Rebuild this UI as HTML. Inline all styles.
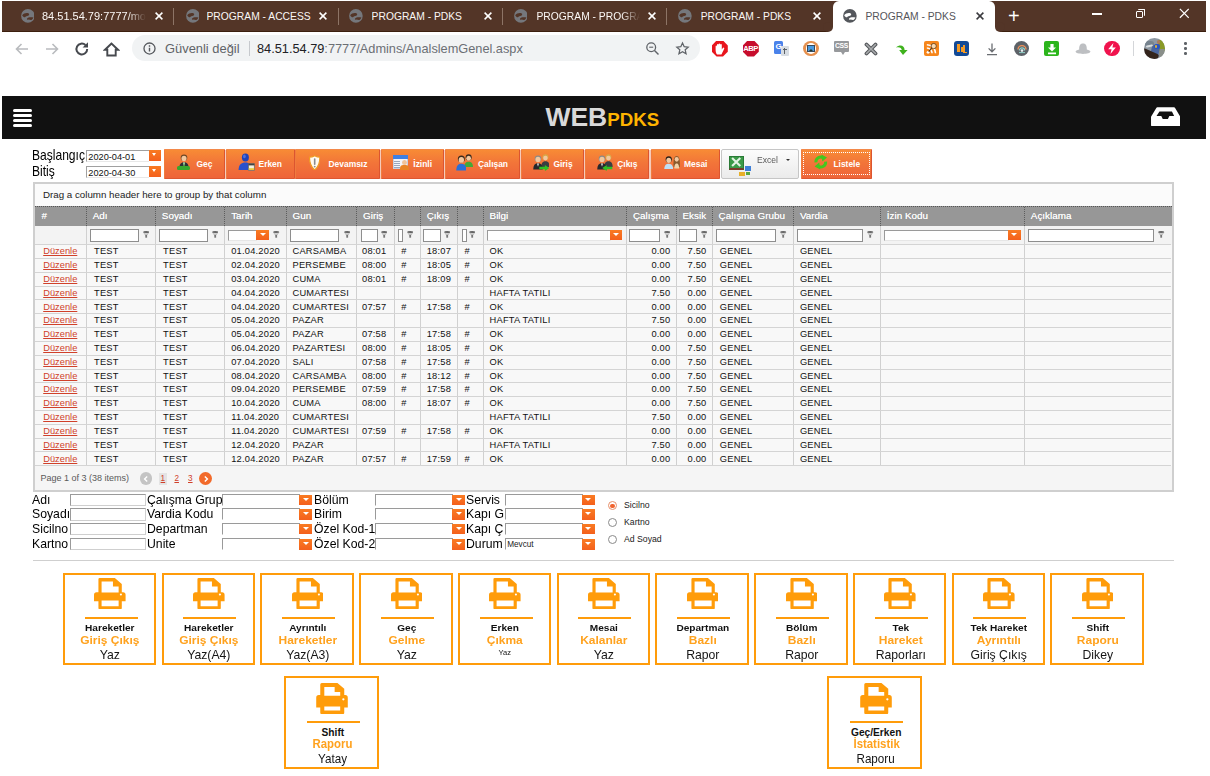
<!DOCTYPE html>
<html lang="tr"><head><meta charset="utf-8"><title>PROGRAM - PDKS</title>
<style>
*{box-sizing:border-box;margin:0;padding:0}
html,body{width:1210px;height:776px;overflow:hidden;background:#fff}
body{position:relative;font-family:"Liberation Sans",sans-serif;color:#000}
.a{position:absolute;white-space:nowrap}
.t{position:absolute;white-space:nowrap;line-height:1}
/* chrome */
#tabbar{left:1.5px;top:1px;width:1204px;height:31px;background:#533527;border-bottom:1px solid #3c1f0e}
.tabtxt{color:#fbf7f5;font-size:10.3px;top:11.5px}
.tabx{color:#fff;font-size:13px;top:9px;font-weight:bold}
.sep{width:1px;height:17px;top:8px;background:#8d7466}
#omni{left:132px;top:34.5px;width:568px;height:26px;border-radius:13px;background:#f1f3f4}
/* header */
#hdr{left:1.5px;top:95.7px;width:1204px;height:43.8px;background:#111}
.bar{left:13.3px;width:18.3px;height:3px;background:#fff;border-radius:1.5px}
/* toolbar */
.btn{top:149.2px;height:29.8px;background:linear-gradient(#f88b35 0%,#f27539 45%,#ee6439 100%);border:1px solid;border-color:#f3894a #dc5530 #dd5731 #f07c3e;border-radius:1px}
.btxt{color:#fff;font-weight:bold;font-size:8.45px;top:159.6px}
/* grid */
.hd{color:#fff;font-size:9.9px;top:211.1px;font-weight:normal;text-shadow:0 0 .6px rgba(255,255,255,.8)}
.vl{width:1px;background:#d0d0d0;top:225.6px;height:240.2px}
.hl{height:1px;background:#d4d4d4;left:35px;width:1136px}
.c{font-size:9.3px;color:#111;letter-spacing:.22px}
.fi{top:228.9px;height:12.7px;background:#fff;border:1px solid #8e8e8e;border-radius:0}
.lnk{color:#d0402a;text-decoration:underline;font-size:9.3px;letter-spacing:0}
/* form */
.lb{font-size:13.3px;color:#000;transform-origin:0 50%;transform:scaleX(.92)}
.inp{height:12.4px;border:1px solid #9a9a9a;border-right-color:#cfcfcf;border-bottom-color:#cfcfcf;background:#fff}
.cb{height:10.6px;width:12.8px;background:linear-gradient(#f97b22,#f4601c)}
/* tiles */
.tile{border:2px solid #ff9c0a;background:#fff}
.l1{font-size:9.2px;font-weight:bold;color:#111;text-align:center;width:100%;left:0;transform:scaleX(1.1)}
.l2{font-size:11.1px;font-weight:bold;color:#ffa21e;text-align:center;width:100%;left:0;transform:scaleX(1.08)}
.l3{font-size:13px;color:#151515;text-align:center;width:100%;left:0;transform:scaleX(.94)}
</style></head>
<body>
<div class="a" id="tabbar"></div>
<div class="a" style="left:832.6px;top:1px;width:162.8px;height:32px;background:#fff;border-radius:6px 6px 0 0"></div>
<div class="a" style="left:827.6px;top:27px;width:5px;height:5px;background:#fff"></div><div class="a" style="left:822.6px;top:22px;width:10px;height:10px;border-radius:5px;background:#533527"></div>
<div class="a" style="left:995.4px;top:27px;width:5px;height:5px;background:#fff"></div><div class="a" style="left:995.4px;top:22px;width:10px;height:10px;border-radius:5px;background:#533527"></div>
<svg class="a" style="left:20.6px;top:8.8px" width="13.8" height="13.8" viewBox="0 0 14 14"><circle cx="7" cy="7" r="6.9" fill="#75777c"/><path d="M1.2 6.4C2.6 4.2 5.4 3.6 7.4 4.2C8.8 4.7 8.6 6.2 7.2 6.8C5.8 7.4 5 7 4.4 8C3.8 9 2.4 8.4 1.2 6.4ZM6.2 9.6C7.2 8.4 9.6 8 12.6 8.6C12 10.2 11 11.2 9.8 11.2C8.6 11.2 8.4 10.6 7.4 10.8C6.4 11 5.6 10.4 6.2 9.6Z" fill="#533527"/></svg><div class="t tabtxt" style="left:42.0px;max-width:104px;overflow:hidden;font-size:11px;top:10.8px;-webkit-mask-image:linear-gradient(90deg,#000 82%,transparent);mask-image:linear-gradient(90deg,#000 82%,transparent)">84.51.54.79:7777/mo</div><svg class="a" style="left:155.0px;top:12.2px" width="8" height="8" viewBox="0 0 8 8"><path d="M.6 .6L7.4 7.4M7.4 .6L.6 7.4" stroke="#fff" stroke-width="1.5"/></svg>
<svg class="a" style="left:185.5px;top:8.8px" width="13.8" height="13.8" viewBox="0 0 14 14"><circle cx="7" cy="7" r="6.9" fill="#75777c"/><path d="M1.2 6.4C2.6 4.2 5.4 3.6 7.4 4.2C8.8 4.7 8.6 6.2 7.2 6.8C5.8 7.4 5 7 4.4 8C3.8 9 2.4 8.4 1.2 6.4ZM6.2 9.6C7.2 8.4 9.6 8 12.6 8.6C12 10.2 11 11.2 9.8 11.2C8.6 11.2 8.4 10.6 7.4 10.8C6.4 11 5.6 10.4 6.2 9.6Z" fill="#533527"/></svg><div class="t tabtxt" style="left:206.5px;max-width:110px;overflow:hidden">PROGRAM - ACCESS</div><svg class="a" style="left:319.0px;top:12.2px" width="8" height="8" viewBox="0 0 8 8"><path d="M.6 .6L7.4 7.4M7.4 .6L.6 7.4" stroke="#fff" stroke-width="1.5"/></svg>
<svg class="a" style="left:349.1px;top:8.8px" width="13.8" height="13.8" viewBox="0 0 14 14"><circle cx="7" cy="7" r="6.9" fill="#75777c"/><path d="M1.2 6.4C2.6 4.2 5.4 3.6 7.4 4.2C8.8 4.7 8.6 6.2 7.2 6.8C5.8 7.4 5 7 4.4 8C3.8 9 2.4 8.4 1.2 6.4ZM6.2 9.6C7.2 8.4 9.6 8 12.6 8.6C12 10.2 11 11.2 9.8 11.2C8.6 11.2 8.4 10.6 7.4 10.8C6.4 11 5.6 10.4 6.2 9.6Z" fill="#533527"/></svg><div class="t tabtxt" style="left:371.6px;max-width:110px;overflow:hidden">PROGRAM - PDKS</div><svg class="a" style="left:483.9px;top:12.2px" width="8" height="8" viewBox="0 0 8 8"><path d="M.6 .6L7.4 7.4M7.4 .6L.6 7.4" stroke="#fff" stroke-width="1.5"/></svg>
<svg class="a" style="left:513.5px;top:8.8px" width="13.8" height="13.8" viewBox="0 0 14 14"><circle cx="7" cy="7" r="6.9" fill="#75777c"/><path d="M1.2 6.4C2.6 4.2 5.4 3.6 7.4 4.2C8.8 4.7 8.6 6.2 7.2 6.8C5.8 7.4 5 7 4.4 8C3.8 9 2.4 8.4 1.2 6.4ZM6.2 9.6C7.2 8.4 9.6 8 12.6 8.6C12 10.2 11 11.2 9.8 11.2C8.6 11.2 8.4 10.6 7.4 10.8C6.4 11 5.6 10.4 6.2 9.6Z" fill="#533527"/></svg><div class="t tabtxt" style="left:536.5px;max-width:103px;overflow:hidden;-webkit-mask-image:linear-gradient(90deg,#000 82%,transparent);mask-image:linear-gradient(90deg,#000 82%,transparent)">PROGRAM - PROGRA</div><svg class="a" style="left:648.0px;top:12.2px" width="8" height="8" viewBox="0 0 8 8"><path d="M.6 .6L7.4 7.4M7.4 .6L.6 7.4" stroke="#fff" stroke-width="1.5"/></svg>
<svg class="a" style="left:678.4px;top:8.8px" width="13.8" height="13.8" viewBox="0 0 14 14"><circle cx="7" cy="7" r="6.9" fill="#75777c"/><path d="M1.2 6.4C2.6 4.2 5.4 3.6 7.4 4.2C8.8 4.7 8.6 6.2 7.2 6.8C5.8 7.4 5 7 4.4 8C3.8 9 2.4 8.4 1.2 6.4ZM6.2 9.6C7.2 8.4 9.6 8 12.6 8.6C12 10.2 11 11.2 9.8 11.2C8.6 11.2 8.4 10.6 7.4 10.8C6.4 11 5.6 10.4 6.2 9.6Z" fill="#533527"/></svg><div class="t tabtxt" style="left:700.7px;max-width:110px;overflow:hidden">PROGRAM - PDKS</div><svg class="a" style="left:812.5px;top:12.2px" width="8" height="8" viewBox="0 0 8 8"><path d="M.6 .6L7.4 7.4M7.4 .6L.6 7.4" stroke="#fff" stroke-width="1.5"/></svg>
<div class="a sep" style="left:173.3px"></div><div class="a sep" style="left:337.9px"></div><div class="a sep" style="left:502.0px"></div><div class="a sep" style="left:666.2px"></div>
<svg class="a" style="left:843.1px;top:8.8px" width="13.8" height="13.8" viewBox="0 0 14 14"><circle cx="7" cy="7" r="6.9" fill="#54575c"/><path d="M1.2 6.4C2.6 4.2 5.4 3.6 7.4 4.2C8.8 4.7 8.6 6.2 7.2 6.8C5.8 7.4 5 7 4.4 8C3.8 9 2.4 8.4 1.2 6.4ZM6.2 9.6C7.2 8.4 9.6 8 12.6 8.6C12 10.2 11 11.2 9.8 11.2C8.6 11.2 8.4 10.6 7.4 10.8C6.4 11 5.6 10.4 6.2 9.6Z" fill="#fff"/></svg><div class="t tabtxt" style="left:865.4px;color:#55555a">PROGRAM - PDKS</div><svg class="a" style="left:976.3px;top:12.2px" width="8" height="8" viewBox="0 0 8 8"><path d="M.6 .6L7.4 7.4M7.4 .6L.6 7.4" stroke="#3a3a3e" stroke-width="1.5"/></svg>
<div class="t" style="left:1008px;top:6px;color:#fff;font-size:20px">+</div><div class="a" style="left:1092px;top:13.4px;width:10px;height:1.4px;background:#fff"></div><div class="a" style="left:1135.6px;top:11px;width:7.4px;height:7.4px;border:1.1px solid #fff;border-radius:1px"></div><div class="a" style="left:1137.8px;top:8.9px;width:7.4px;height:7.4px;border:1.1px solid #fff;border-left:none;border-bottom:none;border-radius:1px"></div><svg class="a" style="left:1178.8px;top:8.4px" width="10.6" height="10.6" viewBox="0 0 12 12"><path d="M1 1L11 11M11 1L1 11" stroke="#fff" stroke-width="1.4"/></svg>
<svg class="a" style="left:14px;top:41px" width="16" height="16" viewBox="0 0 16 16"><path d="M14 8H2.5M7.5 3L2.5 8L7.5 13" fill="none" stroke="#b9bbbe" stroke-width="1.6"/></svg><svg class="a" style="left:44px;top:41px" width="16" height="16" viewBox="0 0 16 16"><path d="M2 8H13.5M8.5 3L13.5 8L8.5 13" fill="none" stroke="#b9bbbe" stroke-width="1.6"/></svg><svg class="a" style="left:73.5px;top:41px" width="16" height="16" viewBox="0 0 16 16"><path d="M13.2 8A5.4 5.4 0 1 1 11.5 4.1" fill="none" stroke="#46494e" stroke-width="2"/><path d="M14 1.2V6.6H8.6Z" fill="#46494e"/></svg><svg class="a" style="left:103px;top:40.5px" width="17" height="17" viewBox="0 0 17 17"><path d="M8.5 2.5L2 8.7H4.3V14.5H12.7V8.7H15Z" fill="none" stroke="#46494e" stroke-width="1.9" stroke-linejoin="miter"/></svg>
<div class="a" id="omni"></div><svg class="a" style="left:142.6px;top:42px" width="13" height="13" viewBox="0 0 12 12"><circle cx="6" cy="6" r="5.1" fill="none" stroke="#55585d" stroke-width="1.2"/><path d="M6 5.3V8.8M6 3.1V4.3" stroke="#55585d" stroke-width="1.3"/></svg><div class="t" style="left:165px;top:42.7px;font-size:12.9px;color:#5f6368">Güvenli değil</div><div class="a" style="left:248.5px;top:40.5px;width:1px;height:15px;background:#c6c9cd"></div><div class="t" style="left:257px;top:42.8px;font-size:12.76px;color:#202124">84.51.54.79<span style="color:#6b6f74">:7777/Admins/AnalslemGenel.aspx</span></div>
<svg class="a" style="left:645px;top:41px" width="15" height="15" viewBox="0 0 15 15"><circle cx="6.2" cy="6.2" r="4.4" fill="none" stroke="#5f6368" stroke-width="1.3"/><path d="M9.5 9.5L13.5 13.5" stroke="#5f6368" stroke-width="1.5"/><path d="M4.2 6.2H8.2" stroke="#5f6368" stroke-width="1.1"/></svg><svg class="a" style="left:675px;top:40.5px" width="15" height="15" viewBox="0 0 24 24"><path d="M12 3.2l2.7 5.9 6.4.7-4.8 4.3 1.4 6.3L12 17.2 6.3 20.4l1.4-6.3L2.9 9.8l6.4-.7z" fill="none" stroke="#5f6368" stroke-width="2"/></svg>
<div class="a" style="left:711.8px;top:40.6px;width:16px;height:16px;background:#e8151d;clip-path:polygon(30% 0,70% 0,100% 30%,100% 70%,70% 100%,30% 100%,0 70%,0 30%)"></div><svg class="a" style="left:715px;top:42.6px" width="10" height="12" viewBox="0 0 10 12"><path d="M2 11.4C1 10 .6 8.6 .6 6.2V3.4Q.6 2.6 1.3 2.6T2 3.4V1.8Q2 1 2.8 1T3.6 1.8V1.2Q3.6 .4 4.4 .4T5.2 1.2V1.8Q5.2 1 6 1T6.8 1.8V6.4L7.8 5Q8.4 4.2 9 4.8T9 6.2L7.4 9.4Q6.8 10.8 6.4 11.4Z" fill="#fff"/></svg><div class="a" style="left:742.8px;top:40.6px;width:16px;height:16px;background:#c70d2c;clip-path:polygon(30% 0,70% 0,100% 30%,100% 70%,70% 100%,30% 100%,0 70%,0 30%)"></div><div class="t" style="left:743.2px;top:44.9px;font-size:7.6px;font-weight:bold;color:#fff;letter-spacing:-.45px">ABP</div><div class="a" style="left:773.8px;top:41.2px;width:9.6px;height:12.6px;background:#4a82ea;border-radius:1.5px"></div><div class="a" style="left:781px;top:46px;width:7.5px;height:10px;background:#d8dde3;border-radius:1px"></div><div class="t" style="left:775.5px;top:43px;font-size:8px;font-weight:bold;color:#fff">G</div><div class="a" style="left:782.6px;top:49px;width:4.4px;height:1.2px;background:#5a6066"></div><div class="a" style="left:784.2px;top:48px;width:1.2px;height:6px;background:#5a6066"></div><div class="a" style="left:803.3px;top:40.7px;width:15.8px;height:15.8px;border-radius:50%;background:#e6914f"></div><div class="a" style="left:806.0px;top:43.4px;width:10.4px;height:10.4px;border-radius:50%;background:#fff"></div><div class="a" style="left:807.4px;top:45.4px;width:7.6px;height:6.4px;background:#4a9ae0;border:1px solid #3a4a5a"></div><div class="a" style="left:809px;top:49px;border:2px solid transparent;border-bottom:2.4px solid #2a3a2a;border-top:none"></div><div class="a" style="left:834px;top:41.3px;width:14.8px;height:10.8px;background:#97999c;border-radius:1px"></div><div class="a" style="left:841.4px;top:51.5px;border:2.5px solid transparent;border-top:3px solid #97999c"></div><div class="t" style="left:834.9px;top:43.2px;font-size:6.8px;font-weight:bold;color:#fff;letter-spacing:-.3px">CSS</div><svg class="a" style="left:863.5px;top:41.6px" width="14" height="14" viewBox="0 0 14 14"><path d="M2.5 2.5L11.5 11.5M11.5 2.5L2.5 11.5" stroke="#55585c" stroke-width="3.8" stroke-linecap="round"/><path d="M2.5 2.5L11.5 11.5M11.5 2.5L2.5 11.5" stroke="#a9abad" stroke-width="1.6" stroke-linecap="round"/></svg><svg class="a" style="left:895px;top:42px" width="14" height="14" viewBox="0 0 14 14"><path d="M1 5.5C5 2 9.5 3.5 9.6 8H12.6L8 13L4.2 8H6.8C6.6 5.8 4.4 4.6 1 5.5Z" fill="#3fb21d"/></svg><div class="a" style="left:924.0px;top:41.0px;width:15.2px;height:15.2px;border-radius:2px;background:#f6861c"></div><svg class="a" style="left:924px;top:41px" width="15.2" height="15.2" viewBox="0 0 15 15"><circle cx="4" cy="11.2" r="1.4" fill="#fff"/><path d="M2.8 7A5.2 5.2 0 0 1 8 12.2M2.8 3.6A8.6 8.6 0 0 1 11.4 12.2" fill="none" stroke="#fff" stroke-width="1.5"/><circle cx="9.6" cy="5" r="2.6" fill="#fbd9b0" stroke="#5a3a18" stroke-width=".8"/><path d="M7.6 7L4.6 10.4" stroke="#5a3a18" stroke-width="1.2"/></svg><div class="a" style="left:954.0px;top:41.0px;width:15.2px;height:15.2px;border-radius:3px;background:#124a96"></div><div class="a" style="left:957.4px;top:43.6px;width:2.2px;height:8.4px;background:#f59a23"></div><div class="a" style="left:960.6px;top:46.6px;width:2.2px;height:5.4px;background:#f59a23"></div><div class="a" style="left:963.4px;top:52px;width:4px;height:1.4px;background:#f59a23"></div><div class="a" style="left:963.4px;top:44.6px;width:1.4px;height:8px;background:#f59a23"></div><svg class="a" style="left:984.8px;top:41.6px" width="14" height="14" viewBox="0 0 14 14"><path d="M7 1.5V9.5M3.6 6.4L7 9.8L10.4 6.4M2 12.6H12" fill="none" stroke="#6a6d72" stroke-width="1.3"/></svg><div class="a" style="left:1013.9px;top:40.9px;width:15.4px;height:15.4px;border-radius:50%;background:#5d6268"></div><svg class="a" style="left:1015.6px;top:42.6px" width="12" height="12" viewBox="0 0 12 12"><path d="M2 6.6A4 4 0 0 1 10 6.6" fill="none" stroke="#f0925a" stroke-width="1.4"/><path d="M3.4 7.4A2.6 2.6 0 0 1 8.6 7.4" fill="none" stroke="#8fd0c8" stroke-width="1.2"/><circle cx="6" cy="7.6" r="1.3" fill="#e8eef0"/><path d="M3 9.6H9" stroke="#8fd0c8" stroke-width="1"/></svg><div class="a" style="left:1044.2px;top:41.0px;width:15.2px;height:15.2px;border-radius:2px;background:#2cb51c"></div><svg class="a" style="left:1045.8px;top:42.6px" width="12" height="12" viewBox="0 0 12 12"><path d="M4.4 1H7.6V4.6H10L6 8.4L2 4.6H4.4ZM2 9.6H10V11.2H2Z" fill="#fff"/></svg><svg class="a" style="left:1074.5px;top:42px" width="16" height="13" viewBox="0 0 16 13"><path d="M4.2 7.5C4 3 5.6 1.4 8 1.4S12 3 11.8 7.5C14 8 15.4 8.8 15.4 9.6C15.4 11 12 12 8 12S.6 11 .6 9.6C.6 8.8 2 8 4.2 7.5Z" fill="#bdbfc2"/></svg><div class="a" style="left:1104.2px;top:40.8px;width:15.6px;height:15.6px;border-radius:50%;background:#f0134d"></div><svg class="a" style="left:1107px;top:43.2px" width="10" height="11" viewBox="0 0 10 11"><path d="M6.4 0L1.2 6.2H4.6L3.4 11L8.8 4.6H5.4Z" fill="#fff"/></svg><div class="a" style="left:1132.6px;top:41px;width:1px;height:15px;background:#d4d6d9"></div><div class="a" style="left:1143.7px;top:37.9px;width:21px;height:21px;border-radius:50%;background:#8e98a2;overflow:hidden"><div class="a" style="left:1px;top:3px;width:9px;height:6px;background:#76838e;border-radius:3px"></div><div class="a" style="left:2px;top:7.4px;width:7px;height:2.4px;background:#d8dde0;border-radius:1px;transform:rotate(-12deg)"></div><div class="a" style="left:14.5px;top:1px;width:8px;height:13px;background:#8a9a26;border-radius:4px"></div><div class="a" style="left:15px;top:11px;width:7px;height:8px;background:#8a8f8a;border-radius:2px"></div><div class="a" style="left:7.6px;top:7px;width:8.4px;height:13px;background:#4a669e;border-radius:4px 4px 2px 2px;transform:rotate(12deg)"></div><div class="a" style="left:10.6px;top:6px;width:5.4px;height:5.6px;background:#2c55c4;border-radius:2px"></div><div class="a" style="left:13px;top:2.6px;width:3.4px;height:3.8px;background:#b07a5a;border-radius:50%"></div><div class="a" style="left:11.2px;top:7.6px;width:2.4px;height:2.4px;background:#d8b030;border-radius:50%"></div><div class="a" style="left:-3px;top:13.5px;width:17px;height:10px;background:#33241b;transform:rotate(24deg);border-radius:2px"></div></div><div class="a" style="left:1183.9px;top:42.1px;width:2.7px;height:2.7px;border-radius:50%;background:#5f6368"></div><div class="a" style="left:1183.9px;top:47.1px;width:2.7px;height:2.7px;border-radius:50%;background:#5f6368"></div><div class="a" style="left:1183.9px;top:52.1px;width:2.7px;height:2.7px;border-radius:50%;background:#5f6368"></div>
<div class="a" id="hdr"></div>
<div class="a bar" style="top:109.3px"></div><div class="a bar" style="top:114.1px"></div><div class="a bar" style="top:118.6px"></div><div class="a bar" style="top:123.9px"></div>
<div class="t" style="left:545.4px;top:103.6px;font-size:26.5px;font-weight:bold;color:#d9d9d9">WEB<span style="font-size:18.7px;color:#ffb400;margin-left:0">PDKS</span></div>
<svg class="a" style="left:1151px;top:106.7px" width="29.4" height="19.6" viewBox="150 255 400 267"><path fill-rule="evenodd" fill="#fff" d="M236 258H464Q472 258 476 266L546 384Q548 388 548 394V500Q548 520 528 520H170Q150 520 150 500V394Q150 388 152 384L224 266Q228 258 236 258ZM265 315L225 378H290L310 420H380L400 378H465L435 315Z"/></svg>
<div class="t lb" style="left:32.3px;top:147.6px;font-size:14.8px;transform:scaleX(.815)">Başlangıç</div><div class="t lb" style="left:32.3px;top:164.1px;font-size:14.8px;transform:scaleX(.815)">Bitiş</div>
<div class="a" style="left:86.3px;top:150.1px;width:63px;height:11.6px;border:1px solid #a0a0a0;border-right:none;border-bottom-color:#e8e8e8;background:#fff"></div><div class="t" style="left:88.3px;top:152.6px;font-size:9.2px;color:#111">2020-04-01</div><div class="a cb" style="left:148.9px;top:149.7px;width:12.1px;height:10.9px"></div><div class="a" style="left:152.3px;top:152.9px;border:2.6px solid transparent;border-top:3px solid #fff"></div>
<div class="a" style="left:86.3px;top:166.2px;width:63px;height:11.6px;border:1px solid #a0a0a0;border-right:none;border-bottom-color:#e8e8e8;background:#fff"></div><div class="t" style="left:88.3px;top:168.7px;font-size:9.2px;color:#111">2020-04-30</div><div class="a cb" style="left:148.9px;top:165.8px;width:12.1px;height:10.9px"></div><div class="a" style="left:152.3px;top:169.0px;border:2.6px solid transparent;border-top:3px solid #fff"></div>
<div class="a" style="left:165px;top:149.6px;width:553px;height:29px;background:#f6cbbb"></div><div class="a btn" style="left:164.1px;width:61.2px"></div><div class="t btxt" style="left:196.5px">Geç</div>
<div class="a btn" style="left:225.8px;width:68.9px"></div><div class="t btxt" style="left:258.5px">Erken</div>
<div class="a btn" style="left:295.2px;width:85.3px"></div><div class="t btxt" style="left:328.5px">Devamsız</div>
<div class="a btn" style="left:381.3px;width:62.7px"></div><div class="t btxt" style="left:413.3px">İzinli</div>
<div class="a btn" style="left:444.8px;width:75.3px"></div><div class="t btxt" style="left:478.0px">Çalışan</div>
<div class="a btn" style="left:520.9px;width:63.2px"></div><div class="t btxt" style="left:553.4px">Giriş</div>
<div class="a btn" style="left:584.5px;width:64.9px"></div><div class="t btxt" style="left:617.2px">Çıkış</div>
<div class="a btn" style="left:650.5px;width:69.1px"></div><div class="t btxt" style="left:684.0px">Mesai</div>
<div class="a" style="left:720.6px;top:149.2px;width:78.8px;height:29.4px;background:linear-gradient(#fcfcfc,#ebebeb);border:1px solid #c6c6c6;border-radius:2px"></div><div class="t" style="left:756.8px;top:156.4px;font-size:9.3px;color:#5a5a5a;transform-origin:0 50%;transform:scaleX(.92)">Excel</div><div class="a" style="left:785.7px;top:159.2px;border:2.8px solid transparent;border-top:2.6px solid #333"></div>
<div class="a btn" style="left:800.9px;width:70.9px"></div><div class="a" style="left:802.6px;top:151.7px;width:67.6px;height:23.8px;border:1px dotted #fff"></div><div class="t btxt" style="left:833.4px">Listele</div>
<svg class="a" style="left:178.8px;top:153.9px" width="10.0" height="14.6" viewBox="0 0 11 16"><path d="M.3 16C.3 10.6 2.6 9 5.5 9S10.7 10.6 10.7 16Z" fill="#2c3036"/><circle cx="5.5" cy="4" r="3.6" fill="#6a4624"/><ellipse cx="5.5" cy="5" rx="2.8" ry="3" fill="#f2c79e"/><path d="M4.3 9.2L5.5 13.6L6.7 9.2Z" fill="#fff"/><path d="M5.1 9.4H5.9L6.1 12.6L5.5 13.4L4.9 12.6Z" fill="#3aa52e"/></svg><div class="a" style="left:177.4px;top:166.4px;width:13px;height:3.5px;border-radius:1.6px;background:#37a72d"></div><svg class="a" style="left:238.4px;top:153px" width="17" height="18" viewBox="0 0 17 18"><path d="M.6 17C.6 11.6 3.4 9.6 7.4 9.6S14.2 11.6 14.2 17Z" fill="#2a50cc"/><ellipse cx="7.4" cy="4.6" rx="3.5" ry="4" fill="#2143b8"/><ellipse cx="6.4" cy="3.4" rx="1.4" ry="1.8" fill="#4a72e0"/><path d="M10.4 10.6H16.4V17.4H10.4Z" fill="#f6f2e2" stroke="#5a5a5a" stroke-width=".7"/><path d="M10.4 10.6H16.4V12.4H10.4Z" fill="#444"/><path d="M10.8 15.2H16V17H10.8Z" fill="#e8c83a"/></svg><svg class="a" style="left:308.5px;top:154.5px" width="11.4" height="15.6" viewBox="0 0 12 16"><path d="M6 .5C7.8 1.5 9.8 2 11.5 2C11.5 8.4 9.8 12.8 6 15.5C2.2 12.8 .5 8.4 .5 2C2.2 2 4.2 1.5 6 .5Z" fill="#fffaf0" stroke="#ef9a22" stroke-width="1.3"/><path d="M6 4V9.6" stroke="#8c8c8c" stroke-width="1.7" stroke-linecap="round"/><circle cx="6" cy="12" r="1" fill="#8c8c8c"/></svg><div class="a" style="left:392.6px;top:154.8px;width:15.8px;height:14.4px;background:#f3f5fa;border:1px solid #c5cfe2"></div><div class="a" style="left:392.6px;top:154.8px;width:15.8px;height:4px;background:#3f80e2"></div><div class="a" style="left:394.2px;top:160.8px;width:5.6px;height:1px;background:#9aa7bd;box-shadow:0 2px #9aa7bd,0 4px #9aa7bd,0 6px #9aa7bd"></div><div class="a" style="left:402px;top:160px;width:5px;height:5.4px;border-radius:50%;background:#f0c39a"></div><div class="a" style="left:400.2px;top:165.2px;width:8.6px;height:5px;border-radius:3.4px 3.4px 0 0;background:#e98426"></div><svg class="a" style="left:463.7px;top:153.6px" width="9.3" height="13.6" viewBox="0 0 11 16"><path d="M.3 16C.3 10.6 2.6 9 5.5 9S10.7 10.6 10.7 16Z" fill="#43a838"/><circle cx="5.5" cy="4" r="3.6" fill="#3a2a1c"/><ellipse cx="5.5" cy="5" rx="2.8" ry="3" fill="#f2c79e"/></svg><svg class="a" style="left:455.6px;top:155.2px" width="10.7" height="15.6" viewBox="0 0 11 16"><path d="M.3 16C.3 10.6 2.6 9 5.5 9S10.7 10.6 10.7 16Z" fill="#2a6ed8"/><circle cx="5.5" cy="4" r="3.6" fill="#3a2a1c"/><ellipse cx="5.5" cy="5" rx="2.8" ry="3" fill="#f2c79e"/></svg><svg class="a" style="left:540.5px;top:153.8px" width="8.9" height="13.0" viewBox="0 0 11 16"><path d="M.3 16C.3 10.6 2.6 9 5.5 9S10.7 10.6 10.7 16Z" fill="#3a3d42"/><circle cx="5.5" cy="4" r="3.6" fill="#d8a848"/><ellipse cx="5.5" cy="5" rx="2.8" ry="3" fill="#f2c79e"/></svg><svg class="a" style="left:533.0px;top:155.2px" width="10.0" height="14.6" viewBox="0 0 11 16"><path d="M.3 16C.3 10.6 2.6 9 5.5 9S10.7 10.6 10.7 16Z" fill="#25282d"/><circle cx="5.5" cy="4" r="3.6" fill="#8a8a86"/><ellipse cx="5.5" cy="5" rx="2.8" ry="3" fill="#f2c79e"/><path d="M4.5 9.2L5.5 13L6.5 9.2Z" fill="#fff"/></svg><svg class="a" style="left:538.6px;top:164.6px" width="10.6" height="6" viewBox="0 0 10 6"><path d="M0 1.8H5.6V0L10 3L5.6 6V4.2H0Z" fill="#2fc024"/></svg><svg class="a" style="left:604.1px;top:153.8px" width="8.9" height="13.0" viewBox="0 0 11 16"><path d="M.3 16C.3 10.6 2.6 9 5.5 9S10.7 10.6 10.7 16Z" fill="#3a3d42"/><circle cx="5.5" cy="4" r="3.6" fill="#d8a848"/><ellipse cx="5.5" cy="5" rx="2.8" ry="3" fill="#f2c79e"/></svg><svg class="a" style="left:596.6px;top:155.2px" width="10.0" height="14.6" viewBox="0 0 11 16"><path d="M.3 16C.3 10.6 2.6 9 5.5 9S10.7 10.6 10.7 16Z" fill="#25282d"/><circle cx="5.5" cy="4" r="3.6" fill="#8a8a86"/><ellipse cx="5.5" cy="5" rx="2.8" ry="3" fill="#f2c79e"/><path d="M4.5 9.2L5.5 13L6.5 9.2Z" fill="#fff"/></svg><svg class="a" style="left:602.2px;top:164.6px" width="10.6" height="6" viewBox="0 0 10 6"><path d="M10 1.8H4.4V0L0 3L4.4 6V4.2H10Z" fill="#2fc024"/></svg><svg class="a" style="left:672.8px;top:155px" width="7.4" height="14" viewBox="0 0 8 15"><path d="M.6 13C.2 6 1 1 4 1S7.8 6 7.4 13Z" fill="#8a5a2c"/><ellipse cx="4" cy="4.6" rx="2.2" ry="2.6" fill="#f2c79e"/><path d="M1.4 14.6C1.4 10.4 2.6 9 4 9S6.6 10.4 6.6 14.6Z" fill="#f0d2a8"/></svg><svg class="a" style="left:663.5px;top:155.6px" width="9.5" height="13.8" viewBox="0 0 11 16"><path d="M.3 16C.3 10.6 2.6 9 5.5 9S10.7 10.6 10.7 16Z" fill="#bfe0f6"/><circle cx="5.5" cy="4" r="3.6" fill="#2a2018"/><ellipse cx="5.5" cy="5" rx="2.8" ry="3" fill="#f2c79e"/></svg><div class="a" style="left:729.2px;top:155.8px;width:14.6px;height:14.6px;background:#3b9a48;border:1px solid #2a7a36;border-bottom:2.4px solid #7a3a2a"></div><svg class="a" style="left:731.4px;top:157.4px" width="10.4" height="10" viewBox="0 0 11 11"><path d="M1 1L10 10M10 1L1 10" stroke="#e4f2e4" stroke-width="2.3"/></svg><div class="a" style="left:745px;top:165.8px;width:6px;height:4.8px;background:#3f7fd8"></div><div class="a" style="left:739.2px;top:171.8px;width:5.4px;height:4px;background:#e8b02a"></div><div class="a" style="left:745.8px;top:171.8px;width:4.2px;height:3.4px;background:#5aa83e"></div><svg class="a" style="left:813.4px;top:154.2px" width="15.6" height="16" viewBox="0 0 16 16"><path d="M3 8.4A5 5 0 0 1 10.6 3.6" fill="none" stroke="#45c81e" stroke-width="3"/><path d="M8.6 .4L14.4 3.4L9.6 7.6Z" fill="#45c81e"/><path d="M13 7.6A5 5 0 0 1 5.4 12.4" fill="none" stroke="#45c81e" stroke-width="3"/><path d="M7.4 15.6L1.6 12.6L6.4 8.4Z" fill="#45c81e"/></svg>
<div class="a" style="left:33px;top:182px;width:1140.6px;height:309.7px;border:2px solid #cfcfcf;background:#fbfbfb"></div>
<div class="t" style="left:43px;top:189.6px;font-size:9.75px;color:#222">Drag a column header here to group by that column</div>
<div class="a" style="left:35px;top:205.6px;width:1136.6px;height:20px;background:#979797;border-top:1px dotted #555"></div>
<div class="a" style="left:35px;top:225.6px;width:1136.6px;height:19px;background:#f3f3f3"></div><div class="a" style="left:35px;top:244.6px;width:1136.6px;height:221.4px;background:#f8f8f8"></div><div class="a" style="left:35px;top:466px;width:1136.6px;height:23.7px;background:#f5f5f5"></div>
<div class="t hd" style="left:41.5px">#</div><div class="t hd" style="left:92.7px">Adı</div><div class="t hd" style="left:161.8px">Soyadı</div><div class="t hd" style="left:231.2px">Tarih</div><div class="t hd" style="left:292.5px">Gun</div><div class="t hd" style="left:363.0px">Giriş</div><div class="t hd" style="left:426.7px">Çıkış</div><div class="t hd" style="left:489.6px">Bilgi</div><div class="t hd" style="left:632.9px">Çalışma</div><div class="t hd" style="left:682.5px">Eksik</div><div class="t hd" style="left:718.6px">Çalışma Grubu</div><div class="t hd" style="left:799.9px">Vardia</div><div class="t hd" style="left:886.8px">İzin Kodu</div><div class="t hd" style="left:1030.8px">Açıklama</div>
<div class="a" style="left:85.7px;top:206.6px;width:0;height:19px;border-left:1px dotted #5c5c5c"></div><div class="a vl" style="left:85.7px"></div><div class="a" style="left:154.8px;top:206.6px;width:0;height:19px;border-left:1px dotted #5c5c5c"></div><div class="a vl" style="left:154.8px"></div><div class="a" style="left:224.2px;top:206.6px;width:0;height:19px;border-left:1px dotted #5c5c5c"></div><div class="a vl" style="left:224.2px"></div><div class="a" style="left:285.5px;top:206.6px;width:0;height:19px;border-left:1px dotted #5c5c5c"></div><div class="a vl" style="left:285.5px"></div><div class="a" style="left:356.0px;top:206.6px;width:0;height:19px;border-left:1px dotted #5c5c5c"></div><div class="a vl" style="left:356.0px"></div><div class="a" style="left:394.2px;top:206.6px;width:0;height:19px;border-left:1px dotted #5c5c5c"></div><div class="a vl" style="left:394.2px"></div><div class="a" style="left:419.7px;top:206.6px;width:0;height:19px;border-left:1px dotted #5c5c5c"></div><div class="a vl" style="left:419.7px"></div><div class="a" style="left:457.4px;top:206.6px;width:0;height:19px;border-left:1px dotted #5c5c5c"></div><div class="a vl" style="left:457.4px"></div><div class="a" style="left:482.6px;top:206.6px;width:0;height:19px;border-left:1px dotted #5c5c5c"></div><div class="a vl" style="left:482.6px"></div><div class="a" style="left:625.9px;top:206.6px;width:0;height:19px;border-left:1px dotted #5c5c5c"></div><div class="a vl" style="left:625.9px"></div><div class="a" style="left:675.5px;top:206.6px;width:0;height:19px;border-left:1px dotted #5c5c5c"></div><div class="a vl" style="left:675.5px"></div><div class="a" style="left:711.6px;top:206.6px;width:0;height:19px;border-left:1px dotted #5c5c5c"></div><div class="a vl" style="left:711.6px"></div><div class="a" style="left:792.9px;top:206.6px;width:0;height:19px;border-left:1px dotted #5c5c5c"></div><div class="a vl" style="left:792.9px"></div><div class="a" style="left:879.8px;top:206.6px;width:0;height:19px;border-left:1px dotted #5c5c5c"></div><div class="a vl" style="left:879.8px"></div><div class="a" style="left:1023.8px;top:206.6px;width:0;height:19px;border-left:1px dotted #5c5c5c"></div><div class="a vl" style="left:1023.8px"></div>
<div class="a hl" style="top:244.10px"></div><div class="a hl" style="top:257.93px"></div><div class="a hl" style="top:271.75px"></div><div class="a hl" style="top:285.57px"></div><div class="a hl" style="top:299.40px"></div><div class="a hl" style="top:313.23px"></div><div class="a hl" style="top:327.05px"></div><div class="a hl" style="top:340.88px"></div><div class="a hl" style="top:354.70px"></div><div class="a hl" style="top:368.52px"></div><div class="a hl" style="top:382.35px"></div><div class="a hl" style="top:396.17px"></div><div class="a hl" style="top:410.00px"></div><div class="a hl" style="top:423.82px"></div><div class="a hl" style="top:437.65px"></div><div class="a hl" style="top:451.48px"></div><div class="a hl" style="top:465.30px"></div>
<div class="a fi" style="left:90.0px;width:48.7px"></div><svg class="a" style="left:142.5px;top:230.9px" width="6.4" height="7" viewBox="0 0 6.4 7"><path d="M.4 1.2L2.4 4.2H4L6 1.2Z" fill="#d2d2d2" stroke="#a0a0a0" stroke-width=".5"/><ellipse cx="3.2" cy="1" rx="3" ry="1" fill="#666"/><rect x="2.3" y="3.9" width="1.8" height="2.8" fill="#777"/></svg><div class="a fi" style="left:159.2px;width:48.5px"></div><svg class="a" style="left:211.5px;top:230.9px" width="6.4" height="7" viewBox="0 0 6.4 7"><path d="M.4 1.2L2.4 4.2H4L6 1.2Z" fill="#d2d2d2" stroke="#a0a0a0" stroke-width=".5"/><ellipse cx="3.2" cy="1" rx="3" ry="1" fill="#666"/><rect x="2.3" y="3.9" width="1.8" height="2.8" fill="#777"/></svg><div class="a fi" style="left:289.6px;width:49.8px"></div><svg class="a" style="left:343.6px;top:230.9px" width="6.4" height="7" viewBox="0 0 6.4 7"><path d="M.4 1.2L2.4 4.2H4L6 1.2Z" fill="#d2d2d2" stroke="#a0a0a0" stroke-width=".5"/><ellipse cx="3.2" cy="1" rx="3" ry="1" fill="#666"/><rect x="2.3" y="3.9" width="1.8" height="2.8" fill="#777"/></svg><div class="a fi" style="left:360.6px;width:17.9px"></div><svg class="a" style="left:381.0px;top:230.9px" width="6.4" height="7" viewBox="0 0 6.4 7"><path d="M.4 1.2L2.4 4.2H4L6 1.2Z" fill="#d2d2d2" stroke="#a0a0a0" stroke-width=".5"/><ellipse cx="3.2" cy="1" rx="3" ry="1" fill="#666"/><rect x="2.3" y="3.9" width="1.8" height="2.8" fill="#777"/></svg><div class="a fi" style="left:397.5px;width:5.1px"></div><svg class="a" style="left:406.5px;top:230.9px" width="6.4" height="7" viewBox="0 0 6.4 7"><path d="M.4 1.2L2.4 4.2H4L6 1.2Z" fill="#d2d2d2" stroke="#a0a0a0" stroke-width=".5"/><ellipse cx="3.2" cy="1" rx="3" ry="1" fill="#666"/><rect x="2.3" y="3.9" width="1.8" height="2.8" fill="#777"/></svg><div class="a fi" style="left:423.1px;width:17.9px"></div><svg class="a" style="left:444.0px;top:230.9px" width="6.4" height="7" viewBox="0 0 6.4 7"><path d="M.4 1.2L2.4 4.2H4L6 1.2Z" fill="#d2d2d2" stroke="#a0a0a0" stroke-width=".5"/><ellipse cx="3.2" cy="1" rx="3" ry="1" fill="#666"/><rect x="2.3" y="3.9" width="1.8" height="2.8" fill="#777"/></svg><div class="a fi" style="left:461.5px;width:5.0px"></div><svg class="a" style="left:469.0px;top:230.9px" width="6.4" height="7" viewBox="0 0 6.4 7"><path d="M.4 1.2L2.4 4.2H4L6 1.2Z" fill="#d2d2d2" stroke="#a0a0a0" stroke-width=".5"/><ellipse cx="3.2" cy="1" rx="3" ry="1" fill="#666"/><rect x="2.3" y="3.9" width="1.8" height="2.8" fill="#777"/></svg><div class="a fi" style="left:629.4px;width:30.4px"></div><svg class="a" style="left:664.1px;top:230.9px" width="6.4" height="7" viewBox="0 0 6.4 7"><path d="M.4 1.2L2.4 4.2H4L6 1.2Z" fill="#d2d2d2" stroke="#a0a0a0" stroke-width=".5"/><ellipse cx="3.2" cy="1" rx="3" ry="1" fill="#666"/><rect x="2.3" y="3.9" width="1.8" height="2.8" fill="#777"/></svg><div class="a fi" style="left:679.4px;width:17.2px"></div><svg class="a" style="left:700.6px;top:230.9px" width="6.4" height="7" viewBox="0 0 6.4 7"><path d="M.4 1.2L2.4 4.2H4L6 1.2Z" fill="#d2d2d2" stroke="#a0a0a0" stroke-width=".5"/><ellipse cx="3.2" cy="1" rx="3" ry="1" fill="#666"/><rect x="2.3" y="3.9" width="1.8" height="2.8" fill="#777"/></svg><div class="a fi" style="left:716.0px;width:60.0px"></div><svg class="a" style="left:780.3px;top:230.9px" width="6.4" height="7" viewBox="0 0 6.4 7"><path d="M.4 1.2L2.4 4.2H4L6 1.2Z" fill="#d2d2d2" stroke="#a0a0a0" stroke-width=".5"/><ellipse cx="3.2" cy="1" rx="3" ry="1" fill="#666"/><rect x="2.3" y="3.9" width="1.8" height="2.8" fill="#777"/></svg><div class="a fi" style="left:797.0px;width:66.0px"></div><svg class="a" style="left:867.3px;top:230.9px" width="6.4" height="7" viewBox="0 0 6.4 7"><path d="M.4 1.2L2.4 4.2H4L6 1.2Z" fill="#d2d2d2" stroke="#a0a0a0" stroke-width=".5"/><ellipse cx="3.2" cy="1" rx="3" ry="1" fill="#666"/><rect x="2.3" y="3.9" width="1.8" height="2.8" fill="#777"/></svg><div class="a fi" style="left:1028.0px;width:125.5px"></div><svg class="a" style="left:1158.3px;top:230.9px" width="6.4" height="7" viewBox="0 0 6.4 7"><path d="M.4 1.2L2.4 4.2H4L6 1.2Z" fill="#d2d2d2" stroke="#a0a0a0" stroke-width=".5"/><ellipse cx="3.2" cy="1" rx="3" ry="1" fill="#666"/><rect x="2.3" y="3.9" width="1.8" height="2.8" fill="#777"/></svg>
<div class="a" style="left:227.8px;top:229.6px;width:29.3px;height:11.6px;background:#fff;border:1px solid #9a9a9a;border-right:none;border-bottom-color:#e6e6e6"></div><div class="a cb" style="left:256.2px;top:229.9px"></div><div class="a" style="left:259.6px;top:232.8px;border:3px solid transparent;border-top:3.2px solid #fff"></div><svg class="a" style="left:273.3px;top:230.9px" width="6.4" height="7" viewBox="0 0 6.4 7"><path d="M.4 1.2L2.4 4.2H4L6 1.2Z" fill="#d2d2d2" stroke="#a0a0a0" stroke-width=".5"/><ellipse cx="3.2" cy="1" rx="3" ry="1" fill="#666"/><rect x="2.3" y="3.9" width="1.8" height="2.8" fill="#777"/></svg><div class="a" style="left:486.5px;top:229.6px;width:124.1px;height:11.6px;background:#fff;border:1px solid #9a9a9a;border-right:none;border-bottom-color:#e6e6e6"></div><div class="a cb" style="left:609.7px;top:229.9px"></div><div class="a" style="left:613.1px;top:232.8px;border:3px solid transparent;border-top:3.2px solid #fff"></div><div class="a" style="left:883.6px;top:229.6px;width:125.3px;height:11.6px;background:#fff;border:1px solid #9a9a9a;border-right:none;border-bottom-color:#e6e6e6"></div><div class="a cb" style="left:1008.0px;top:229.9px"></div><div class="a" style="left:1011.4px;top:232.8px;border:3px solid transparent;border-top:3.2px solid #fff"></div>
<div class="t c" style="top:247.20px;left:0;width:1210px;height:10px"><span class="a" style="left:43.2px"><span class="lnk">Düzenle</span></span><span class="a" style="left:94.0px">TEST</span><span class="a" style="left:163.1px">TEST</span><span class="a" style="left:231.2px">01.04.2020</span><span class="a" style="left:292.5px">CARSAMBA</span><span class="a" style="left:362.0px">08:01</span><span class="a" style="left:401.2px">#</span><span class="a" style="left:426.7px">18:07</span><span class="a" style="left:464.4px">#</span><span class="a" style="left:489.6px">OK</span><span class="a" style="left:719.8px">GENEL</span><span class="a" style="left:799.9px">GENEL</span><span class="a" style="right:539.6px">0.00</span><span class="a" style="right:503.5px">7.50</span></div>
<div class="t c" style="top:261.03px;left:0;width:1210px;height:10px"><span class="a" style="left:43.2px"><span class="lnk">Düzenle</span></span><span class="a" style="left:94.0px">TEST</span><span class="a" style="left:163.1px">TEST</span><span class="a" style="left:231.2px">02.04.2020</span><span class="a" style="left:292.5px">PERSEMBE</span><span class="a" style="left:362.0px">08:00</span><span class="a" style="left:401.2px">#</span><span class="a" style="left:426.7px">18:05</span><span class="a" style="left:464.4px">#</span><span class="a" style="left:489.6px">OK</span><span class="a" style="left:719.8px">GENEL</span><span class="a" style="left:799.9px">GENEL</span><span class="a" style="right:539.6px">0.00</span><span class="a" style="right:503.5px">7.50</span></div>
<div class="t c" style="top:274.85px;left:0;width:1210px;height:10px"><span class="a" style="left:43.2px"><span class="lnk">Düzenle</span></span><span class="a" style="left:94.0px">TEST</span><span class="a" style="left:163.1px">TEST</span><span class="a" style="left:231.2px">03.04.2020</span><span class="a" style="left:292.5px">CUMA</span><span class="a" style="left:362.0px">08:01</span><span class="a" style="left:401.2px">#</span><span class="a" style="left:426.7px">18:09</span><span class="a" style="left:464.4px">#</span><span class="a" style="left:489.6px">OK</span><span class="a" style="left:719.8px">GENEL</span><span class="a" style="left:799.9px">GENEL</span><span class="a" style="right:539.6px">0.00</span><span class="a" style="right:503.5px">7.50</span></div>
<div class="t c" style="top:288.68px;left:0;width:1210px;height:10px"><span class="a" style="left:43.2px"><span class="lnk">Düzenle</span></span><span class="a" style="left:94.0px">TEST</span><span class="a" style="left:163.1px">TEST</span><span class="a" style="left:231.2px">04.04.2020</span><span class="a" style="left:292.5px">CUMARTESI</span><span class="a" style="left:489.6px">HAFTA TATILI</span><span class="a" style="left:719.8px">GENEL</span><span class="a" style="left:799.9px">GENEL</span><span class="a" style="right:539.6px">7.50</span><span class="a" style="right:503.5px">0.00</span></div>
<div class="t c" style="top:302.50px;left:0;width:1210px;height:10px"><span class="a" style="left:43.2px"><span class="lnk">Düzenle</span></span><span class="a" style="left:94.0px">TEST</span><span class="a" style="left:163.1px">TEST</span><span class="a" style="left:231.2px">04.04.2020</span><span class="a" style="left:292.5px">CUMARTESI</span><span class="a" style="left:362.0px">07:57</span><span class="a" style="left:401.2px">#</span><span class="a" style="left:426.7px">17:58</span><span class="a" style="left:464.4px">#</span><span class="a" style="left:489.6px">OK</span><span class="a" style="left:719.8px">GENEL</span><span class="a" style="left:799.9px">GENEL</span><span class="a" style="right:539.6px">0.00</span><span class="a" style="right:503.5px">0.00</span></div>
<div class="t c" style="top:316.33px;left:0;width:1210px;height:10px"><span class="a" style="left:43.2px"><span class="lnk">Düzenle</span></span><span class="a" style="left:94.0px">TEST</span><span class="a" style="left:163.1px">TEST</span><span class="a" style="left:231.2px">05.04.2020</span><span class="a" style="left:292.5px">PAZAR</span><span class="a" style="left:489.6px">HAFTA TATILI</span><span class="a" style="left:719.8px">GENEL</span><span class="a" style="left:799.9px">GENEL</span><span class="a" style="right:539.6px">7.50</span><span class="a" style="right:503.5px">0.00</span></div>
<div class="t c" style="top:330.15px;left:0;width:1210px;height:10px"><span class="a" style="left:43.2px"><span class="lnk">Düzenle</span></span><span class="a" style="left:94.0px">TEST</span><span class="a" style="left:163.1px">TEST</span><span class="a" style="left:231.2px">05.04.2020</span><span class="a" style="left:292.5px">PAZAR</span><span class="a" style="left:362.0px">07:58</span><span class="a" style="left:401.2px">#</span><span class="a" style="left:426.7px">17:58</span><span class="a" style="left:464.4px">#</span><span class="a" style="left:489.6px">OK</span><span class="a" style="left:719.8px">GENEL</span><span class="a" style="left:799.9px">GENEL</span><span class="a" style="right:539.6px">0.00</span><span class="a" style="right:503.5px">0.00</span></div>
<div class="t c" style="top:343.98px;left:0;width:1210px;height:10px"><span class="a" style="left:43.2px"><span class="lnk">Düzenle</span></span><span class="a" style="left:94.0px">TEST</span><span class="a" style="left:163.1px">TEST</span><span class="a" style="left:231.2px">06.04.2020</span><span class="a" style="left:292.5px">PAZARTESI</span><span class="a" style="left:362.0px">08:00</span><span class="a" style="left:401.2px">#</span><span class="a" style="left:426.7px">18:05</span><span class="a" style="left:464.4px">#</span><span class="a" style="left:489.6px">OK</span><span class="a" style="left:719.8px">GENEL</span><span class="a" style="left:799.9px">GENEL</span><span class="a" style="right:539.6px">0.00</span><span class="a" style="right:503.5px">7.50</span></div>
<div class="t c" style="top:357.80px;left:0;width:1210px;height:10px"><span class="a" style="left:43.2px"><span class="lnk">Düzenle</span></span><span class="a" style="left:94.0px">TEST</span><span class="a" style="left:163.1px">TEST</span><span class="a" style="left:231.2px">07.04.2020</span><span class="a" style="left:292.5px">SALI</span><span class="a" style="left:362.0px">07:58</span><span class="a" style="left:401.2px">#</span><span class="a" style="left:426.7px">17:58</span><span class="a" style="left:464.4px">#</span><span class="a" style="left:489.6px">OK</span><span class="a" style="left:719.8px">GENEL</span><span class="a" style="left:799.9px">GENEL</span><span class="a" style="right:539.6px">0.00</span><span class="a" style="right:503.5px">7.50</span></div>
<div class="t c" style="top:371.62px;left:0;width:1210px;height:10px"><span class="a" style="left:43.2px"><span class="lnk">Düzenle</span></span><span class="a" style="left:94.0px">TEST</span><span class="a" style="left:163.1px">TEST</span><span class="a" style="left:231.2px">08.04.2020</span><span class="a" style="left:292.5px">CARSAMBA</span><span class="a" style="left:362.0px">08:00</span><span class="a" style="left:401.2px">#</span><span class="a" style="left:426.7px">18:12</span><span class="a" style="left:464.4px">#</span><span class="a" style="left:489.6px">OK</span><span class="a" style="left:719.8px">GENEL</span><span class="a" style="left:799.9px">GENEL</span><span class="a" style="right:539.6px">0.00</span><span class="a" style="right:503.5px">7.50</span></div>
<div class="t c" style="top:385.45px;left:0;width:1210px;height:10px"><span class="a" style="left:43.2px"><span class="lnk">Düzenle</span></span><span class="a" style="left:94.0px">TEST</span><span class="a" style="left:163.1px">TEST</span><span class="a" style="left:231.2px">09.04.2020</span><span class="a" style="left:292.5px">PERSEMBE</span><span class="a" style="left:362.0px">07:59</span><span class="a" style="left:401.2px">#</span><span class="a" style="left:426.7px">17:58</span><span class="a" style="left:464.4px">#</span><span class="a" style="left:489.6px">OK</span><span class="a" style="left:719.8px">GENEL</span><span class="a" style="left:799.9px">GENEL</span><span class="a" style="right:539.6px">0.00</span><span class="a" style="right:503.5px">7.50</span></div>
<div class="t c" style="top:399.27px;left:0;width:1210px;height:10px"><span class="a" style="left:43.2px"><span class="lnk">Düzenle</span></span><span class="a" style="left:94.0px">TEST</span><span class="a" style="left:163.1px">TEST</span><span class="a" style="left:231.2px">10.04.2020</span><span class="a" style="left:292.5px">CUMA</span><span class="a" style="left:362.0px">08:00</span><span class="a" style="left:401.2px">#</span><span class="a" style="left:426.7px">18:07</span><span class="a" style="left:464.4px">#</span><span class="a" style="left:489.6px">OK</span><span class="a" style="left:719.8px">GENEL</span><span class="a" style="left:799.9px">GENEL</span><span class="a" style="right:539.6px">0.00</span><span class="a" style="right:503.5px">7.50</span></div>
<div class="t c" style="top:413.10px;left:0;width:1210px;height:10px"><span class="a" style="left:43.2px"><span class="lnk">Düzenle</span></span><span class="a" style="left:94.0px">TEST</span><span class="a" style="left:163.1px">TEST</span><span class="a" style="left:231.2px">11.04.2020</span><span class="a" style="left:292.5px">CUMARTESI</span><span class="a" style="left:489.6px">HAFTA TATILI</span><span class="a" style="left:719.8px">GENEL</span><span class="a" style="left:799.9px">GENEL</span><span class="a" style="right:539.6px">7.50</span><span class="a" style="right:503.5px">0.00</span></div>
<div class="t c" style="top:426.93px;left:0;width:1210px;height:10px"><span class="a" style="left:43.2px"><span class="lnk">Düzenle</span></span><span class="a" style="left:94.0px">TEST</span><span class="a" style="left:163.1px">TEST</span><span class="a" style="left:231.2px">11.04.2020</span><span class="a" style="left:292.5px">CUMARTESI</span><span class="a" style="left:362.0px">07:59</span><span class="a" style="left:401.2px">#</span><span class="a" style="left:426.7px">17:58</span><span class="a" style="left:464.4px">#</span><span class="a" style="left:489.6px">OK</span><span class="a" style="left:719.8px">GENEL</span><span class="a" style="left:799.9px">GENEL</span><span class="a" style="right:539.6px">0.00</span><span class="a" style="right:503.5px">0.00</span></div>
<div class="t c" style="top:440.75px;left:0;width:1210px;height:10px"><span class="a" style="left:43.2px"><span class="lnk">Düzenle</span></span><span class="a" style="left:94.0px">TEST</span><span class="a" style="left:163.1px">TEST</span><span class="a" style="left:231.2px">12.04.2020</span><span class="a" style="left:292.5px">PAZAR</span><span class="a" style="left:489.6px">HAFTA TATILI</span><span class="a" style="left:719.8px">GENEL</span><span class="a" style="left:799.9px">GENEL</span><span class="a" style="right:539.6px">7.50</span><span class="a" style="right:503.5px">0.00</span></div>
<div class="t c" style="top:454.58px;left:0;width:1210px;height:10px"><span class="a" style="left:43.2px"><span class="lnk">Düzenle</span></span><span class="a" style="left:94.0px">TEST</span><span class="a" style="left:163.1px">TEST</span><span class="a" style="left:231.2px">12.04.2020</span><span class="a" style="left:292.5px">PAZAR</span><span class="a" style="left:362.0px">07:57</span><span class="a" style="left:401.2px">#</span><span class="a" style="left:426.7px">17:59</span><span class="a" style="left:464.4px">#</span><span class="a" style="left:489.6px">OK</span><span class="a" style="left:719.8px">GENEL</span><span class="a" style="left:799.9px">GENEL</span><span class="a" style="right:539.6px">0.00</span><span class="a" style="right:503.5px">0.00</span></div>
<div class="t" style="left:40.5px;top:474.2px;font-size:9px;color:#5a5a5a">Page 1 of 3 (38 items)</div><div class="a" style="left:139.7px;top:472.4px;width:12.6px;height:12.6px;border-radius:50%;background:#c4c4c4"></div><svg class="a" style="left:142.6px;top:475.7px" width="6" height="6" viewBox="0 0 6 6"><path d="M4.2 .6L1.6 3L4.2 5.4" fill="none" stroke="#fff" stroke-width="1.4"/></svg><div class="a" style="left:199.1px;top:472.2px;width:13px;height:13px;border-radius:50%;background:#f26a2a"></div><svg class="a" style="left:203px;top:475.7px" width="6" height="6" viewBox="0 0 6 6"><path d="M1.8 .6L4.4 3L1.8 5.4" fill="none" stroke="#fff" stroke-width="1.4"/></svg><div class="a" style="left:158.6px;top:472.6px;width:8.4px;height:12px;background:#e4e4e4"></div><div class="t" style="left:160.6px;top:474.6px;font-size:8.2px;color:#d0402a;text-decoration:underline">1</div><div class="t" style="left:174.4px;top:474.6px;font-size:8.2px;color:#d0402a;text-decoration:underline">2</div><div class="t" style="left:188.0px;top:474.6px;font-size:8.2px;color:#d0402a;text-decoration:underline">3</div>
<div class="t lb" style="left:32.1px;top:492.6px">Adı</div><div class="a inp" style="left:70px;top:493.7px;width:76.4px"></div><div class="t lb" style="left:147.3px;top:492.6px">Çalışma Grup</div><div class="a" style="left:221.7px;top:493.7px;width:78.4px;height:12px;border:1px solid #9a9a9a;border-right:none;border-bottom-color:transparent;background:#fff"></div><div class="a cb" style="left:299.3px;top:494.6px"></div><div class="a" style="left:302.7px;top:497.5px;border:3px solid transparent;border-top:3.2px solid #fff"></div><div class="t lb" style="left:313.5px;top:492.6px">Bölüm</div><div class="a" style="left:375.4px;top:493.7px;width:77.5px;height:12px;border:1px solid #9a9a9a;border-right:none;border-bottom-color:transparent;background:#fff"></div><div class="a cb" style="left:452.1px;top:494.6px"></div><div class="a" style="left:455.5px;top:497.5px;border:3px solid transparent;border-top:3.2px solid #fff"></div><div class="t lb" style="left:466px;top:492.6px">Servis</div><div class="a" style="left:505.0px;top:493.7px;width:77.8px;height:12px;border:1px solid #9a9a9a;border-right:none;border-bottom-color:transparent;background:#fff"></div><div class="a cb" style="left:582.0px;top:494.6px"></div><div class="a" style="left:585.4px;top:497.5px;border:3px solid transparent;border-top:3.2px solid #fff"></div>
<div class="t lb" style="left:32.1px;top:507.2px">Soyadı</div><div class="a inp" style="left:70px;top:508.3px;width:76.4px"></div><div class="t lb" style="left:147.3px;top:507.2px">Vardia Kodu</div><div class="a" style="left:221.7px;top:508.3px;width:78.4px;height:12px;border:1px solid #9a9a9a;border-right:none;border-bottom-color:transparent;background:#fff"></div><div class="a cb" style="left:299.3px;top:509.2px"></div><div class="a" style="left:302.7px;top:512.1px;border:3px solid transparent;border-top:3.2px solid #fff"></div><div class="t lb" style="left:313.5px;top:507.2px">Birim</div><div class="a" style="left:375.4px;top:508.3px;width:77.5px;height:12px;border:1px solid #9a9a9a;border-right:none;border-bottom-color:transparent;background:#fff"></div><div class="a cb" style="left:452.1px;top:509.2px"></div><div class="a" style="left:455.5px;top:512.1px;border:3px solid transparent;border-top:3.2px solid #fff"></div><div class="t lb" style="left:466px;top:507.2px">Kapı G</div><div class="a" style="left:505.0px;top:508.3px;width:77.8px;height:12px;border:1px solid #9a9a9a;border-right:none;border-bottom-color:transparent;background:#fff"></div><div class="a cb" style="left:582.0px;top:509.2px"></div><div class="a" style="left:585.4px;top:512.1px;border:3px solid transparent;border-top:3.2px solid #fff"></div>
<div class="t lb" style="left:32.1px;top:521.9px">Sicilno</div><div class="a inp" style="left:70px;top:523.0px;width:76.4px"></div><div class="t lb" style="left:147.3px;top:521.9px">Departman</div><div class="a" style="left:221.7px;top:523.0px;width:78.4px;height:12px;border:1px solid #9a9a9a;border-right:none;border-bottom-color:transparent;background:#fff"></div><div class="a cb" style="left:299.3px;top:523.9px"></div><div class="a" style="left:302.7px;top:526.8px;border:3px solid transparent;border-top:3.2px solid #fff"></div><div class="t lb" style="left:313.5px;top:521.9px">Özel Kod-1</div><div class="a" style="left:375.4px;top:523.0px;width:77.5px;height:12px;border:1px solid #9a9a9a;border-right:none;border-bottom-color:transparent;background:#fff"></div><div class="a cb" style="left:452.1px;top:523.9px"></div><div class="a" style="left:455.5px;top:526.8px;border:3px solid transparent;border-top:3.2px solid #fff"></div><div class="t lb" style="left:466px;top:521.9px">Kapı Ç</div><div class="a" style="left:505.0px;top:523.0px;width:77.8px;height:12px;border:1px solid #9a9a9a;border-right:none;border-bottom-color:transparent;background:#fff"></div><div class="a cb" style="left:582.0px;top:523.9px"></div><div class="a" style="left:585.4px;top:526.8px;border:3px solid transparent;border-top:3.2px solid #fff"></div>
<div class="t lb" style="left:32.1px;top:537.0px">Kartno</div><div class="a inp" style="left:70px;top:538.1px;width:76.4px"></div><div class="t lb" style="left:147.3px;top:537.0px">Unite</div><div class="a" style="left:221.7px;top:538.1px;width:78.4px;height:12px;border:1px solid #9a9a9a;border-right:none;border-bottom-color:transparent;background:#fff"></div><div class="a cb" style="left:299.3px;top:539.0px"></div><div class="a" style="left:302.7px;top:541.9px;border:3px solid transparent;border-top:3.2px solid #fff"></div><div class="t lb" style="left:313.5px;top:537.0px">Özel Kod-2</div><div class="a" style="left:375.4px;top:538.1px;width:77.5px;height:12px;border:1px solid #9a9a9a;border-right:none;border-bottom-color:transparent;background:#fff"></div><div class="a cb" style="left:452.1px;top:539.0px"></div><div class="a" style="left:455.5px;top:541.9px;border:3px solid transparent;border-top:3.2px solid #fff"></div><div class="t lb" style="left:466px;top:537.0px">Durum</div><div class="a" style="left:505.0px;top:538.1px;width:77.8px;height:12px;border:1px solid #9a9a9a;border-right:none;border-bottom-color:transparent;background:#fff"></div><div class="a cb" style="left:582.0px;top:539.0px"></div><div class="a" style="left:585.4px;top:541.9px;border:3px solid transparent;border-top:3.2px solid #fff"></div><div class="t" style="left:507.2px;top:540.9px;font-size:8.2px;color:#222">Mevcut</div>
<div class="a" style="left:608.1px;top:501.2px;width:9px;height:9px;border-radius:50%;border:1px solid #e8906a;background:#fff"></div><div class="a" style="left:610.4px;top:503.5px;width:4.4px;height:4.4px;border-radius:50%;background:#f0632e"></div><div class="t" style="left:624px;top:501.3px;font-size:8.7px;color:#222">Sicilno</div><div class="a" style="left:608.1px;top:517.9px;width:9px;height:9px;border-radius:50%;border:1px solid #8a8a8a;background:#fff"></div><div class="t" style="left:624px;top:518.0px;font-size:8.7px;color:#222">Kartno</div><div class="a" style="left:608.1px;top:534.7px;width:9px;height:9px;border-radius:50%;border:1px solid #8a8a8a;background:#fff"></div><div class="t" style="left:624px;top:534.8px;font-size:8.7px;color:#222">Ad Soyad</div>
<div class="a" style="left:32.6px;top:560px;width:1141px;height:1.4px;background:#cfcfcf"></div>
<div class="a tile" style="left:62.7px;top:573.2px;width:93.6px;height:91.6px"><svg class="a" style="left:29.6px;top:3.0px" width="31.6" height="31.2" viewBox="0 0 250 247"><path fill="#ff9c0a" fill-rule="evenodd" d="M35 10Q35 0 45 0H165L220 48V113H230Q250 113 250 133V185H220V237Q220 247 210 247H45Q35 247 35 237V185H0V133Q0 113 20 113H35ZM60 27V115H195V68H150V27ZM60 178H195V223H60ZM213 122A8.5 8.5 0 1 0 213 139A8.5 8.5 0 1 0 213 122Z"/></svg><div class="a" style="left:19.9px;top:41.6px;width:53px;height:1.8px;background:#ff9c0a"></div><div class="t l1" style="top:48.6px;left:.8px">Hareketler</div><div class="t l2" style="top:59.7px;left:.8px">Giriş Çıkış</div><div class="t l3" style="top:73.2px;left:.8px">Yaz</div></div>
<div class="a tile" style="left:161.5px;top:573.2px;width:93.6px;height:91.6px"><svg class="a" style="left:29.6px;top:3.0px" width="31.6" height="31.2" viewBox="0 0 250 247"><path fill="#ff9c0a" fill-rule="evenodd" d="M35 10Q35 0 45 0H165L220 48V113H230Q250 113 250 133V185H220V237Q220 247 210 247H45Q35 247 35 237V185H0V133Q0 113 20 113H35ZM60 27V115H195V68H150V27ZM60 178H195V223H60ZM213 122A8.5 8.5 0 1 0 213 139A8.5 8.5 0 1 0 213 122Z"/></svg><div class="a" style="left:19.9px;top:41.6px;width:53px;height:1.8px;background:#ff9c0a"></div><div class="t l1" style="top:48.6px;left:.8px">Hareketler</div><div class="t l2" style="top:59.7px;left:.8px">Giriş Çıkış</div><div class="t l3" style="top:73.2px;left:.8px">Yaz(A4)</div></div>
<div class="a tile" style="left:260.2px;top:573.2px;width:93.6px;height:91.6px"><svg class="a" style="left:29.6px;top:3.0px" width="31.6" height="31.2" viewBox="0 0 250 247"><path fill="#ff9c0a" fill-rule="evenodd" d="M35 10Q35 0 45 0H165L220 48V113H230Q250 113 250 133V185H220V237Q220 247 210 247H45Q35 247 35 237V185H0V133Q0 113 20 113H35ZM60 27V115H195V68H150V27ZM60 178H195V223H60ZM213 122A8.5 8.5 0 1 0 213 139A8.5 8.5 0 1 0 213 122Z"/></svg><div class="a" style="left:19.9px;top:41.6px;width:53px;height:1.8px;background:#ff9c0a"></div><div class="t l1" style="top:48.6px;left:.8px">Ayrıntılı</div><div class="t l2" style="top:59.7px;left:.8px">Hareketler</div><div class="t l3" style="top:73.2px;left:.8px">Yaz(A3)</div></div>
<div class="a tile" style="left:359.0px;top:573.2px;width:93.6px;height:91.6px"><svg class="a" style="left:29.6px;top:3.0px" width="31.6" height="31.2" viewBox="0 0 250 247"><path fill="#ff9c0a" fill-rule="evenodd" d="M35 10Q35 0 45 0H165L220 48V113H230Q250 113 250 133V185H220V237Q220 247 210 247H45Q35 247 35 237V185H0V133Q0 113 20 113H35ZM60 27V115H195V68H150V27ZM60 178H195V223H60ZM213 122A8.5 8.5 0 1 0 213 139A8.5 8.5 0 1 0 213 122Z"/></svg><div class="a" style="left:19.9px;top:41.6px;width:53px;height:1.8px;background:#ff9c0a"></div><div class="t l1" style="top:48.6px;left:.8px">Geç</div><div class="t l2" style="top:59.7px;left:.8px">Gelme</div><div class="t l3" style="top:73.2px;left:.8px">Yaz</div></div>
<div class="a tile" style="left:457.7px;top:573.2px;width:93.6px;height:91.6px"><svg class="a" style="left:29.6px;top:3.0px" width="31.6" height="31.2" viewBox="0 0 250 247"><path fill="#ff9c0a" fill-rule="evenodd" d="M35 10Q35 0 45 0H165L220 48V113H230Q250 113 250 133V185H220V237Q220 247 210 247H45Q35 247 35 237V185H0V133Q0 113 20 113H35ZM60 27V115H195V68H150V27ZM60 178H195V223H60ZM213 122A8.5 8.5 0 1 0 213 139A8.5 8.5 0 1 0 213 122Z"/></svg><div class="a" style="left:19.9px;top:41.6px;width:53px;height:1.8px;background:#ff9c0a"></div><div class="t l1" style="top:48.6px;left:.8px">Erken</div><div class="t l2" style="top:59.7px;left:.8px">Çıkma</div><div class="t l3" style="top:73.4px;left:.8px;font-size:8px">Yaz</div></div>
<div class="a tile" style="left:556.5px;top:573.2px;width:93.6px;height:91.6px"><svg class="a" style="left:29.6px;top:3.0px" width="31.6" height="31.2" viewBox="0 0 250 247"><path fill="#ff9c0a" fill-rule="evenodd" d="M35 10Q35 0 45 0H165L220 48V113H230Q250 113 250 133V185H220V237Q220 247 210 247H45Q35 247 35 237V185H0V133Q0 113 20 113H35ZM60 27V115H195V68H150V27ZM60 178H195V223H60ZM213 122A8.5 8.5 0 1 0 213 139A8.5 8.5 0 1 0 213 122Z"/></svg><div class="a" style="left:19.9px;top:41.6px;width:53px;height:1.8px;background:#ff9c0a"></div><div class="t l1" style="top:48.6px;left:.8px">Mesai</div><div class="t l2" style="top:59.7px;left:.8px">Kalanlar</div><div class="t l3" style="top:73.2px;left:.8px">Yaz</div></div>
<div class="a tile" style="left:655.3px;top:573.2px;width:93.6px;height:91.6px"><svg class="a" style="left:29.6px;top:3.0px" width="31.6" height="31.2" viewBox="0 0 250 247"><path fill="#ff9c0a" fill-rule="evenodd" d="M35 10Q35 0 45 0H165L220 48V113H230Q250 113 250 133V185H220V237Q220 247 210 247H45Q35 247 35 237V185H0V133Q0 113 20 113H35ZM60 27V115H195V68H150V27ZM60 178H195V223H60ZM213 122A8.5 8.5 0 1 0 213 139A8.5 8.5 0 1 0 213 122Z"/></svg><div class="a" style="left:19.9px;top:41.6px;width:53px;height:1.8px;background:#ff9c0a"></div><div class="t l1" style="top:48.6px;left:.8px">Departman</div><div class="t l2" style="top:59.7px;left:.8px">Bazlı</div><div class="t l3" style="top:73.2px;left:.8px">Rapor</div></div>
<div class="a tile" style="left:754.0px;top:573.2px;width:93.6px;height:91.6px"><svg class="a" style="left:29.6px;top:3.0px" width="31.6" height="31.2" viewBox="0 0 250 247"><path fill="#ff9c0a" fill-rule="evenodd" d="M35 10Q35 0 45 0H165L220 48V113H230Q250 113 250 133V185H220V237Q220 247 210 247H45Q35 247 35 237V185H0V133Q0 113 20 113H35ZM60 27V115H195V68H150V27ZM60 178H195V223H60ZM213 122A8.5 8.5 0 1 0 213 139A8.5 8.5 0 1 0 213 122Z"/></svg><div class="a" style="left:19.9px;top:41.6px;width:53px;height:1.8px;background:#ff9c0a"></div><div class="t l1" style="top:48.6px;left:.8px">Bölüm</div><div class="t l2" style="top:59.7px;left:.8px">Bazlı</div><div class="t l3" style="top:73.2px;left:.8px">Rapor</div></div>
<div class="a tile" style="left:852.8px;top:573.2px;width:93.6px;height:91.6px"><svg class="a" style="left:29.6px;top:3.0px" width="31.6" height="31.2" viewBox="0 0 250 247"><path fill="#ff9c0a" fill-rule="evenodd" d="M35 10Q35 0 45 0H165L220 48V113H230Q250 113 250 133V185H220V237Q220 247 210 247H45Q35 247 35 237V185H0V133Q0 113 20 113H35ZM60 27V115H195V68H150V27ZM60 178H195V223H60ZM213 122A8.5 8.5 0 1 0 213 139A8.5 8.5 0 1 0 213 122Z"/></svg><div class="a" style="left:19.9px;top:41.6px;width:53px;height:1.8px;background:#ff9c0a"></div><div class="t l1" style="top:48.6px;left:.8px">Tek</div><div class="t l2" style="top:59.7px;left:.8px">Hareket</div><div class="t l3" style="top:73.2px;left:.8px">Raporları</div></div>
<div class="a tile" style="left:951.5px;top:573.2px;width:93.6px;height:91.6px"><svg class="a" style="left:29.6px;top:3.0px" width="31.6" height="31.2" viewBox="0 0 250 247"><path fill="#ff9c0a" fill-rule="evenodd" d="M35 10Q35 0 45 0H165L220 48V113H230Q250 113 250 133V185H220V237Q220 247 210 247H45Q35 247 35 237V185H0V133Q0 113 20 113H35ZM60 27V115H195V68H150V27ZM60 178H195V223H60ZM213 122A8.5 8.5 0 1 0 213 139A8.5 8.5 0 1 0 213 122Z"/></svg><div class="a" style="left:19.9px;top:41.6px;width:53px;height:1.8px;background:#ff9c0a"></div><div class="t l1" style="top:48.6px;left:.8px">Tek Hareket</div><div class="t l2" style="top:59.7px;left:.8px">Ayrıntılı</div><div class="t l3" style="top:73.2px;left:.8px">Giriş Çıkış</div></div>
<div class="a tile" style="left:1050.3px;top:573.2px;width:93.6px;height:91.6px"><svg class="a" style="left:29.6px;top:3.0px" width="31.6" height="31.2" viewBox="0 0 250 247"><path fill="#ff9c0a" fill-rule="evenodd" d="M35 10Q35 0 45 0H165L220 48V113H230Q250 113 250 133V185H220V237Q220 247 210 247H45Q35 247 35 237V185H0V133Q0 113 20 113H35ZM60 27V115H195V68H150V27ZM60 178H195V223H60ZM213 122A8.5 8.5 0 1 0 213 139A8.5 8.5 0 1 0 213 122Z"/></svg><div class="a" style="left:19.9px;top:41.6px;width:53px;height:1.8px;background:#ff9c0a"></div><div class="t l1" style="top:48.6px;left:.8px">Shift</div><div class="t l2" style="top:59.7px;left:.8px">Raporu</div><div class="t l3" style="top:73.2px;left:.8px">Dikey</div></div>
<div class="a tile" style="left:284.0px;top:675.7px;width:95.0px;height:93.3px"><svg class="a" style="left:29.6px;top:4.9px" width="32" height="31.2" viewBox="0 0 250 247"><path fill="#ff9c0a" fill-rule="evenodd" d="M32 12Q32 0 44 0H168L222 46V96H230Q250 96 250 116V194H222V235Q222 247 210 247H44Q32 247 32 235V194H0V116Q0 96 20 96H32ZM64 32V100H190V72H146V32ZM64 186H190V218H64ZM215 120A9 9 0 1 0 215 138A9 9 0 1 0 215 120Z"/></svg><div class="a" style="left:20.6px;top:43.8px;width:53px;height:1.6px;background:#ff9c0a"></div><div class="t l1" style="top:50px;left:1.4px;font-size:10.2px;transform:none">Shift</div><div class="t l2" style="top:60.6px;left:1.4px;font-size:12px;transform:scaleX(.95)">Raporu</div><div class="t l3" style="top:75px;left:1.2px;font-size:12.4px">Yatay</div></div>
<div class="a tile" style="left:827.2px;top:675.7px;width:95.2px;height:93.3px"><svg class="a" style="left:30.8px;top:4.9px" width="32" height="31.2" viewBox="0 0 250 247"><path fill="#ff9c0a" fill-rule="evenodd" d="M32 12Q32 0 44 0H168L222 46V96H230Q250 96 250 116V194H222V235Q222 247 210 247H44Q32 247 32 235V194H0V116Q0 96 20 96H32ZM64 32V100H190V72H146V32ZM64 186H190V218H64ZM215 120A9 9 0 1 0 215 138A9 9 0 1 0 215 120Z"/></svg><div class="a" style="left:20.7px;top:43.8px;width:53px;height:1.6px;background:#ff9c0a"></div><div class="t l1" style="top:50px;left:1.4px;font-size:10.2px;transform:none">Geç/Erken</div><div class="t l2" style="top:60.6px;left:1.4px;font-size:12px;transform:scaleX(.95)">İstatistik</div><div class="t l3" style="top:75px;left:1.2px;font-size:12.4px">Raporu</div></div>
</body></html>
